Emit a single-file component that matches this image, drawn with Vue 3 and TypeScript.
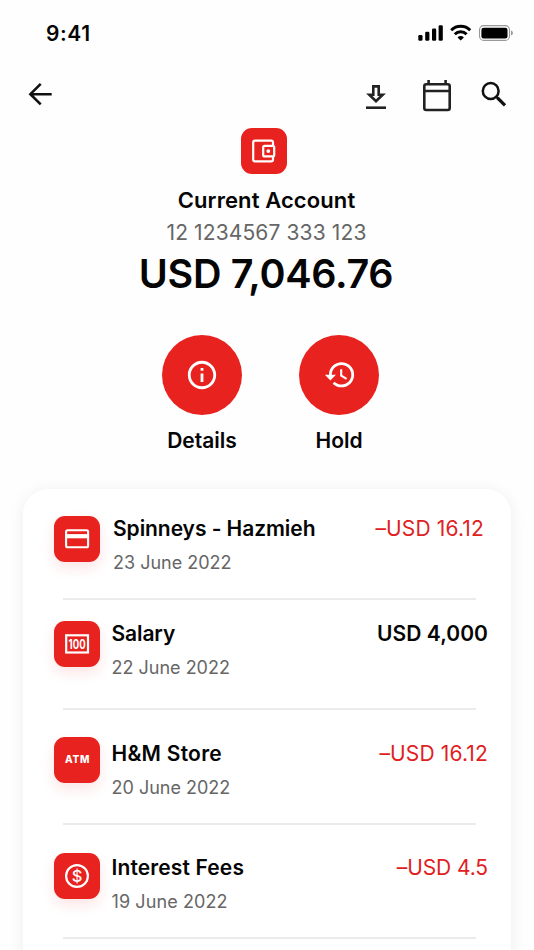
<script setup lang="ts">
type IconName = 'card' | 'cash' | 'atm' | 'fees'

interface Transaction {
  id: string
  icon: IconName
  title: string
  date: string
  amount: string
  debit: boolean
}

const transactions: Transaction[] = [
  { id: 'spinneys', icon: 'card', title: 'Spinneys - Hazmieh', date: '23 June 2022', amount: '–USD 16.12', debit: true },
  { id: 'salary', icon: 'cash', title: 'Salary', date: '22 June 2022', amount: 'USD 4,000', debit: false },
  { id: 'hm', icon: 'atm', title: 'H&M Store', date: '20 June 2022', amount: '–USD 16.12', debit: true },
  { id: 'interest', icon: 'fees', title: 'Interest Fees', date: '19 June 2022', amount: '–USD 4.5', debit: true },
]
</script>

<template>
  <main class="screen">
    <header class="status">
      <span class="time">9:41</span>
      <svg class="indicators" width="96" height="18" viewBox="0 0 96 18">
        <rect x="0.3" y="11" width="4.2" height="5.8" rx="1.3" />
        <rect x="7.2" y="7.8" width="4.2" height="9" rx="1.3" />
        <rect x="14" y="4.6" width="4.2" height="12.2" rx="1.3" />
        <rect x="20.6" y="1.3" width="4.2" height="15.5" rx="1.3" />
        <g fill="none" stroke="#000" stroke-width="3">
          <path d="M33.2 6.2a13.6 13.6 0 0 1 19 0" />
          <path d="M36.8 10.2a8.4 8.4 0 0 1 11.8 0" />
        </g>
        <path d="M39.5 13.4a4.6 4.6 0 0 1 6.4 0l-3.2 3.2z" />
        <rect x="61.5" y="1.6" width="30" height="14.8" rx="4.2" fill="none" stroke="#999" stroke-width="1.1" />
        <rect x="63.4" y="3.7" width="26.1" height="10.7" rx="2.2" />
        <path d="M93 6.6c1.4.5 1.9 1.4 1.9 2.4s-.5 1.9-1.9 2.4z" fill="#999" />
      </svg>
    </header>

    <nav class="toolbar">
      <svg class="back" width="26" height="26" viewBox="0 0 26 26">
        <path d="M24.7 13.2H3.8M13.7 2.9L3.4 13.2l10.3 10.2" fill="none" stroke="#111" stroke-width="2.6" />
      </svg>
      <svg class="download" width="22" height="26" viewBox="0 0 22 26">
        <path d="M8.3 2.4h5.4v8.3h4L11 17.2l-6.700-6.5h4z" fill="none" stroke="#222" stroke-width="2.6" />
        <path d="M1 23.7h20" stroke="#222" stroke-width="2.6" />
      </svg>
      <svg class="calendar" width="30" height="32" viewBox="0 0 30 32">
        <g fill="none" stroke="#222" stroke-width="2.6">
          <rect x="2.3" y="4.2" width="25.4" height="25.8" rx="2" />
          <path d="M2 11h26M6.6 0v4M23.6 0v4" />
        </g>
      </svg>
      <svg class="search" width="28" height="28" viewBox="0 0 28 28">
        <g fill="none" stroke="#111" stroke-width="2.5">
          <circle cx="10.7" cy="11" r="7.9" />
          <path d="M16.4 16.8l1.8 1.8" />
          <path d="M17.6 18l7.4 7.4" stroke-width="3.2" />
        </g>
      </svg>
    </nav>

    <section class="summary">
      <div class="tile">
        <svg width="46" height="46" viewBox="0 0 46 46">
          <g fill="none" stroke="#fff" stroke-width="2.2">
            <path d="M32 17v-2.5a1.8 1.8 0 0 0-1.800-1.800H14a1.800 1.800 0 0 0-1.800 1.800v17a1.800 1.800 0 0 0 1.800 1.800h16.200a1.800 1.800 0 0 0 1.800-1.800V29" />
            <rect x="22.2" y="17.8" width="11" height="10.6" rx="1.5" />
          </g>
          <circle cx="27.3" cy="23.1" r="1.9" fill="#fff" />
        </svg>
      </div>
      <h1 class="name">Current Account</h1>
      <p class="number">12 1234567 333 123</p>
      <p class="balance">USD 7,046.76</p>
    </section>

    <section class="actions">
      <div class="action">
        <button class="round" type="button" aria-label="Details">
          <svg width="34" height="34" viewBox="0 0 24 24" fill="#fff">
            <path d="M11 7h2v2h-2zm0 4h2v6h-2zm1-9C6.480 2 2 6.480 2 12s4.480 10 10 10 10-4.480 10-10S17.520 2 12 2zm0 18c-4.410 0-8-3.590-8-8s3.590-8 8-8 8 3.590 8 8-3.590 8-8 8z" />
          </svg>
        </button>
        <span class="label">Details</span>
      </div>
      <div class="action">
        <button class="round" type="button" aria-label="Hold">
          <svg width="33.5" height="33.5" viewBox="-0.7 0 24 24" fill="#fff">
            <path d="M13.300 3a9 9 0 0 0-9 9h-3l3.890 3.890.07.14L9.300 12h-3c0-3.870 3.130-7 7-7s7 3.130 7 7-3.130 7-7 7c-1.930 0-3.680-.79-4.940-2.060l-1.420 1.420A8.954 8.954 0 0 0 13.300 21a9 9 0 0 0 0-18zm-1 5v5l4.280 2.540.72-1.210-3.500-2.080V8z" />
          </svg>
        </button>
        <span class="label">Hold</span>
      </div>
    </section>

    <section class="card">
      <article v-for="t in transactions" :key="t.id" class="row" :class="t.id">
        <div class="tile glow">
          <svg width="46" height="46" viewBox="0 0 46 46">
            <g v-if="t.icon === 'card'">
              <rect x="12.1" y="14.2" width="22" height="17" rx="1.5" fill="none" stroke="#fff" stroke-width="2.1" />
              <path d="M12 20.2h22" stroke="#fff" stroke-width="4.2" />
            </g>
            <g v-else-if="t.icon === 'cash'">
              <rect x="12.2" y="14.3" width="21.8" height="17.2" fill="none" stroke="#fff" stroke-width="2.2" />
              <text class="glyph cash" x="23.1" y="27.5" text-anchor="middle" textLength="17" lengthAdjust="spacingAndGlyphs">100</text>
            </g>
            <text v-else-if="t.icon === 'atm'" class="glyph atm" x="23.2" y="26.3" text-anchor="middle" textLength="24.5">ATM</text>
            <g v-else>
              <circle cx="23" cy="23" r="10.9" fill="none" stroke="#fff" stroke-width="2.2" />
              <text class="glyph fees" x="23" y="28.8" text-anchor="middle">$</text>
            </g>
          </svg>
        </div>
        <div class="info">
          <h2 class="title">{{ t.title }}</h2>
          <p class="date">{{ t.date }}</p>
        </div>
        <span class="amount" :class="{ debit: t.debit }">{{ t.amount }}</span>
      </article>
    </section>
  </main>
</template>

<style>
body {
  background: #fff;
  overflow: hidden;
}
</style>

<style scoped>
.screen {
  width: 534px;
  height: 950px;
  overflow: hidden;
  display: flex;
  flex-direction: column;
  box-sizing: border-box;
  background: #fefefe;
  color: #050505;
  font-family: Inter, "Liberation Sans", sans-serif;
}

h1, h2, p {
  margin: 0;
}

svg {
  display: block;
  flex: none;
}

.status {
  display: flex;
  justify-content: space-between;
  height: 66px;
  flex: none;
  align-items: center;
  padding: 0 20px 0 46px;
}

.time {
  font-size: 21px;
  font-weight: 560;
  letter-spacing: 0.6px;
}

.toolbar {
  display: flex;
  height: 62px;
  flex: none;
  align-items: flex-start;
  padding: 0 26px 0 27px;
}

.back { margin-top: 15px; }
.download { margin: 18px 0 0 auto; }
.calendar { margin: 14px 0 0 35px; }
.search { margin: 14px 0 0 28px; }

.tile {
  width: 46px;
  height: 46px;
  flex: none;
  border-radius: 11px;
  background: #e8221e;
}

.glow {
  box-shadow: 0 6px 14px rgba(232, 34, 30, 0.12);
}

.summary {
  display: flex;
  flex-direction: column;
  align-items: center;
  flex: none;
  height: 207px;
  padding-right: 7px;
}

.name {
  margin-top: 12px;
  padding-left: 6px;
  font-size: 22px;
  line-height: 28px;
  font-weight: 560;
  letter-spacing: 0.1px;
}

.number {
  margin-top: 5px;
  padding-left: 6px;
  font-size: 21px;
  line-height: 28px;
  letter-spacing: 0.12px;
  color: #666;
}

.balance {
  margin-top: 2px;
  padding-left: 5px;
  font-size: 39.5px;
  line-height: 50px;
  font-weight: 590;
  letter-spacing: -0.3px;
  white-space: nowrap;
}

.actions {
  display: flex;
  flex: none;
  gap: 57px;
  height: 154px;
  padding-left: 162px;
}

.action {
  width: 80px;
  display: flex;
  flex-direction: column;
  align-items: center;
}

.round {
  width: 80px;
  height: 80px;
  padding: 0;
  border: 0;
  border-radius: 50%;
  background: #e8221e;
  display: flex;
  align-items: center;
  justify-content: center;
}

.label {
  margin-top: 12px;
  font-size: 21px;
  line-height: 28px;
  font-weight: 560;
}

.card {
  flex: none;
  width: 488px;
  height: 500px;
  margin-left: 23px;
  border-radius: 25px;
  background: #fff;
  box-shadow: 0 2px 16px rgba(0, 0, 0, 0.07);
}

.row {
  display: flex;
  align-items: flex-start;
  box-sizing: border-box;
  height: 110px;
  padding: 21px 23px 0 31px;
  background: linear-gradient(#ebebeb, #ebebeb) 40px 100% / 413px 2px no-repeat;
}

.info {
  padding-left: 11.5px;
  flex: 1;
}

.title {
  font-size: 21px;
  line-height: 26px;
  font-weight: 560;
  letter-spacing: -0.1px;
}

.date {
  margin-top: 9px;
  font-size: 18px;
  line-height: 24px;
  color: #666;
}

.amount {
  font-size: 21px;
  line-height: 26px;
  font-weight: 570;
  letter-spacing: 0.05px;
}

.amount.debit {
  font-weight: 400;
  letter-spacing: 0.15px;
  color: #df211e;
}

.spinneys { height: 111px; padding-top: 27px; padding-right: 27px; }
.spinneys .info { padding-left: 13px; }
.spinneys .title { letter-spacing: -0.06px; }
.hm { height: 115px; padding-top: 27px; }
.hm .title { margin-top: 4px; letter-spacing: 0.25px; }
.hm .amount { margin-top: 4px; }
.interest { height: 114px; padding-top: 28px; }
.interest .title { margin-top: 2px; letter-spacing: 0.13px; }
.interest .date { letter-spacing: 0.1px; }
.interest .amount.debit { margin-top: 2px; letter-spacing: -0.1px; }

.glyph {
  fill: #fff;
  font-family: Inter, "Liberation Sans", sans-serif;
  font-weight: 700;
}

.glyph.cash { font-size: 12.5px; }
.glyph.atm { font-size: 10px; font-weight: 800; }
.glyph.fees { font-size: 16.5px; font-weight: 500; }
</style>
